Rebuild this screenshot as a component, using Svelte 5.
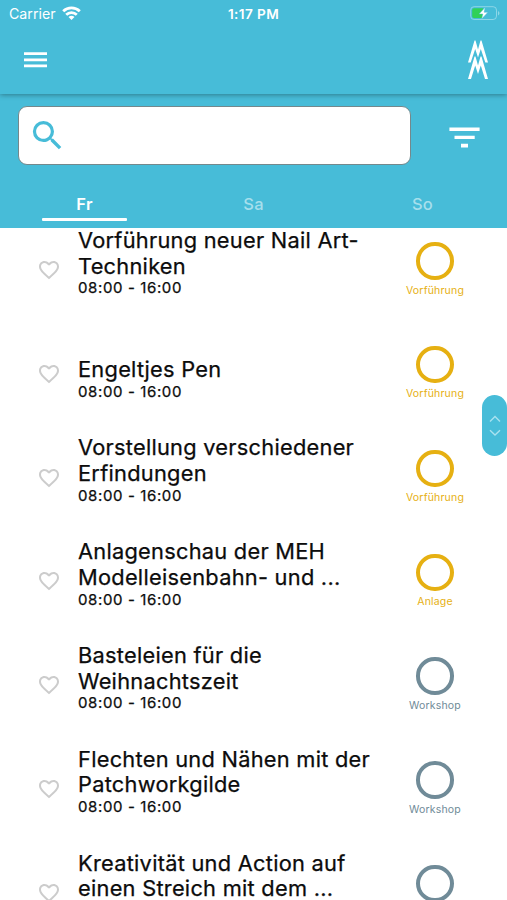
<script>
  const rows = [
    { lines: ['Vorführung neuer Nail Art-', 'Techniken'], kind: 'Vorführung' },
    { lines: ['Engeltjes Pen'], kind: 'Vorführung' },
    { lines: ['Vorstellung verschiedener', 'Erfindungen'], kind: 'Vorführung' },
    { lines: ['Anlagenschau der MEH', 'Modelleisenbahn- und ...'], kind: 'Anlage' },
    { lines: ['Basteleien für die', 'Weihnachtszeit'], kind: 'Workshop' },
    { lines: ['Flechten und Nähen mit der', 'Patchworkgilde'], kind: 'Workshop' },
    { lines: ['Kreativität und Action auf', 'einen Streich mit dem ...'], kind: 'Workshop' }
  ];
  const days = ['Fr', 'Sa', 'So'];
  let active = $state('Fr');
</script>

<div class="screen">
  <header class="top">
    <div class="status">
      <div class="carrier">
        <span>Carrier</span>
        <svg width="19" height="14" viewBox="0 0 19 14" fill="none" stroke="#fff" stroke-width="2.8">
          <path d="M1.200 5.300a12 12 0 0 1 16.600 0M4.200 8.700a7.700 7.700 0 0 1 10.600 0" />
          <path d="M9.500 14 6.500 11a4.500 4.500 0 0 1 6 0z" fill="#fff" stroke="none" />
        </svg>
      </div>
      <span class="clock">1:17 PM</span>
      <svg class="battery" width="30" height="15" viewBox="0 0 30 15">
        <rect x=".7" y=".7" width="25.8" height="12.8" rx="3.4" fill="none" stroke="#a4dfec" stroke-opacity=".75" />
        <path d="M28 5v4.400c2-.8 2-3.600 0-4.400z" fill="#8fd8e8" />
        <path d="M4 2.200h9.200v9.800H4a1.800 1.800 0 0 1-1.800-1.800V4A1.800 1.800 0 0 1 4 2.200z" fill="#30d158" />
        <path d="M15.300 1.200 9 8h3.800l-1.200 5L18 6.200h-3.900z" fill="#fff" stroke="#47bcd8" stroke-width=".5" />
      </svg>
    </div>
    <div class="bar">
      <svg width="23" height="16" viewBox="0 0 23 16" fill="#fff">
        <path d="M0 .2h23v2.700H0zM0 6.500h23v2.700H0zM0 12.600h23v2.700H0z" />
      </svg>
      <svg class="logo" width="20" height="40" viewBox="0 0 20 40" fill="#fff">
        <path d="M0 22.500 6.500.5H7.500L10 9.500 12.500.5H13.500L20 22.500H17.300L12.800 9 10 17.500 7.200 9 2.700 22.500z" />
        <path d="M0 39 6.500 16.500H7.500L10 25.500 12.500 16.500H13.500L20 39H17L12.800 25.500 10 34 7.200 25.500 3 39z" />
      </svg>
    </div>
  </header>

  <section class="tools">
    <div class="searchrow">
      <div class="search">
        <svg width="39" height="39" viewBox="0 0 24 24" fill="#47bcd8">
          <path d="M15.500 14h-.790l-.280-.270A6.470 6.470 0 0 0 16 9.500 6.500 6.500 0 1 0 9.500 16c1.610 0 3.090-.590 4.230-1.570l.270.280v.790l5 4.990L20.490 19l-4.990-5zm-6 0C7.010 14 5 11.990 5 9.500S7.010 5 9.500 5 14 7.010 14 9.500 11.990 14 9.500 14z" />
        </svg>
      </div>
      <svg class="filter" width="31" height="21" viewBox="0 0 31 21" fill="#fff">
        <path d="M.4.5h30.200v3.400H.4zM5.500 8.700h20.200v3.300H5.500zM12 16.800h7v3.600h-7z" />
      </svg>
    </div>
    <nav>
      {#each days as day}
        <button class:active={active === day} onclick={() => (active = day)}>{day}</button>
      {/each}
    </nav>
  </section>

  <main>
    <div class="list">
      {#each rows as row}
        <article>
          <svg class="heart" width="24" height="24" viewBox="0 0 24 24" fill="#ccc">
            <path d="M16.500 3c-1.740 0-3.410.810-4.500 2.090C10.910 3.810 9.240 3 7.500 3 4.420 3 2 5.420 2 8.500c0 3.780 3.400 6.860 8.550 11.540L12 21.350l1.450-1.320C18.600 15.360 22 12.280 22 8.500 22 5.420 19.580 3 16.500 3zm-4.400 15.550l-.100.100-.100-.100C7.140 14.240 4 11.390 4 8.500 4 6.500 5.500 5 7.500 5c1.540 0 3.040.990 3.570 2.360h1.870C13.460 5.990 14.960 5 16.500 5c2 0 3.500 1.500 3.500 3.500 0 2.890-3.140 5.740-7.900 10.050z" />
          </svg>
          <div class="info">
            {#each row.lines as text}
              <div class="title">{text}</div>
            {/each}
            <div class="time">08:00 - 16:00</div>
          </div>
          <div class="kind" class:workshop={row.kind === 'Workshop'}>
            <div class="ring"></div>
            <span>{row.kind}</span>
          </div>
        </article>
      {/each}
    </div>
  </main>

  <div class="scroller">
    <svg width="12" height="22" viewBox="0 0 12 22" fill="none" stroke="#a9e2ef" stroke-width="1.400">
      <path d="M1 6.500 6 1.600l5 4.900M1 15.200l5 4.900 5-4.900" />
    </svg>
  </div>
</div>

<style>
  :global(body) { margin: 0; background: #fff; }
  .screen {
    position: relative;
    display: flex;
    flex-direction: column;
    width: 507px;
    height: 900px;
    overflow: hidden;
    background: #fff;
    font-family: Inter, "Liberation Sans", sans-serif;
    color: #0c0c0c;
  }
  .top {
    flex: none;
    height: 94px;
    background: #47bcd8;
    color: #fff;
    box-shadow: 0 1px 5px rgba(0, 0, 0, .35);
    z-index: 1;
  }
  .status {
    display: grid;
    grid-template-columns: 1fr auto 1fr;
    align-items: center;
    height: 27px;
    padding: 0 7px 0 9px;
  }
  .carrier { display: flex; align-items: center; gap: 6px; font-size: 14.200px; letter-spacing: 0; }
  .carrier svg { margin-top: -2px; }
  .clock { margin-left: -2px; font-size: 13.600px; font-weight: 600; letter-spacing: .4px; }
  .battery { justify-self: end; }
  .bar {
    display: flex;
    align-items: center;
    justify-content: space-between;
    height: 66px;
    padding: 0 19px 0 24px;
  }
  .tools {
    flex: none;
    display: flex;
    flex-direction: column;
    height: 134px;
    background: #47bcd8;
  }
  .searchrow { display: flex; align-items: center; padding: 12px 27px 0 18px; justify-content: space-between; }
  .search {
    box-sizing: border-box;
    display: flex;
    align-items: center;
    width: 393px;
    height: 58.500px;
    padding-left: 9px;
    border: 1.500px solid #74888c;
    border-radius: 9px;
    background: #fff;
  }
  .filter { margin-top: 5px; }
  nav { display: flex; margin-top: auto; height: 50px; }
  nav button {
    flex: 1;
    display: flex;
    flex-direction: column;
    align-items: center;
    justify-content: space-between;
    padding: 15.500px 0 7px;
    border: 0;
    background: none;
    font: 500 16.500px/21px Inter, "Liberation Sans", sans-serif;
    letter-spacing: .2px;
    color: #a6dfec;
  }
  nav button::after { content: ""; width: 85px; height: 3px; border-radius: 1px; }
  nav button.active { color: #fff; font-weight: 600; }
  nav button.active::after { background: #fff; }
  main { flex: 1; min-height: 0; overflow: hidden; }
  .list { margin-top: -19px; }
  article { display: flex; height: 103.800px; }
  .heart { flex: none; margin: 49px 0 0 37px; }
  .info {
    display: flex;
    flex-direction: column;
    justify-content: flex-end;
    width: 310px;
    margin-left: 17px;
    padding-bottom: 15.600px;
    white-space: nowrap;
  }
  .title { font-size: 21.800px; line-height: 25.700px; letter-spacing: .26px; -webkit-text-stroke: .25px currentColor; }
  .time { font-size: 15px; line-height: 18px; letter-spacing: .62px; -webkit-text-stroke: .25px currentColor; }
  .kind {
    display: flex;
    flex-direction: column;
    align-items: center;
    width: 94px;
    padding-top: 33.200px;
    color: #e6b012;
  }
  .ring { box-sizing: border-box; width: 37.500px; height: 37.500px; border: 4px solid currentColor; border-radius: 50%; }
  .kind span { margin-top: 4px; font-size: 10.500px; line-height: 14px; letter-spacing: .18px; }
  .workshop { color: #708b98; }
  .scroller {
    position: absolute;
    top: 395px;
    right: 0;
    display: flex;
    align-items: center;
    justify-content: center;
    width: 25px;
    height: 61px;
    border-radius: 12.500px;
    background: #47bcd8;
  }
</style>
